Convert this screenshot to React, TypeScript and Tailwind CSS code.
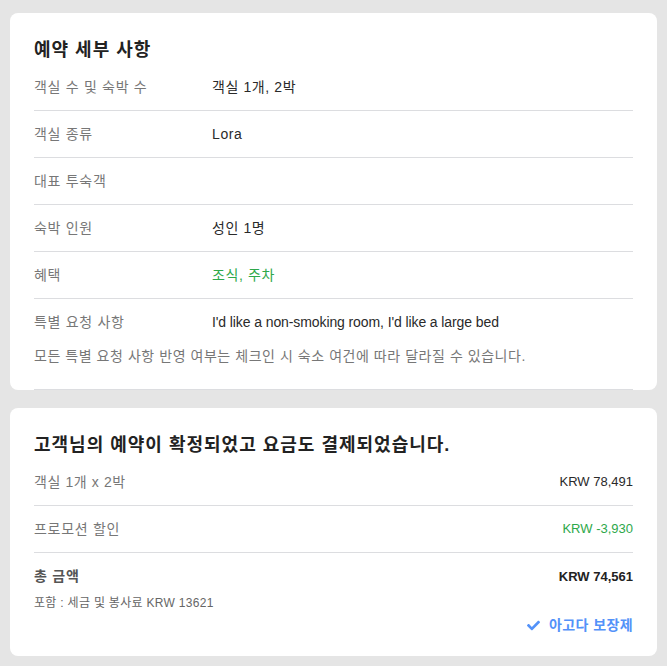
import { FaCheck } from "react-icons/fa";

const details = [
  { label: "객실 수 및 숙박 수", value: "객실 1개, 2박" },
  { label: "객실 종류", value: "Lora" },
  { label: "대표 투숙객", value: "" },
  { label: "숙박 인원", value: "성인 1명" },
  { label: "혜택", value: "조식, 주차", green: true },
  { label: "특별 요청 사항", value: "I'd like a non-smoking room, I'd like a large bed", latin: true },
];

export default function App() {
  return (
    <div
      className="min-h-[666px] bg-[#e5e5e5] px-[10px] pt-[13px] pb-[10px] flex flex-col gap-[18px]"
      style={{ fontFamily: '"Liberation Sans", "Noto Sans CJK KR", sans-serif' }}
    >
      {/* Booking details */}
      <section className="bg-white rounded-lg pt-[23px] px-6">
        <h2 className="text-[18px] leading-[28px] font-bold text-[#222] tracking-[1px]">예약 세부 사항</h2>
        <div>
          {details.map((row, i) => (
            <div
              key={row.label}
              className={`flex h-[47px] items-center text-[14px] ${i < details.length - 1 ? "border-b border-[#dcdde0]" : ""}`}
            >
              <div className="w-[178px] text-[#777] tracking-[0.7px]">{row.label}</div>
              <div
                className={`${row.green ? "text-[#2ea84a]" : "text-[#2a2a2a]"} ${row.latin ? "tracking-[-0.1px]" : "tracking-[0.6px]"}`}
              >
                {row.value}
              </div>
            </div>
          ))}
        </div>
        <p className="text-[14px] text-[#777] tracking-[0.55px] pb-[22px] border-b border-[#dcdde0]">
          모든 특별 요청 사항 반영 여부는 체크인 시 숙소 여건에 따라 달라질 수 있습니다.
        </p>
      </section>

      {/* Payment summary */}
      <section className="bg-white rounded-lg pt-[23px] pb-[20px] px-6">
        <h2 className="text-[18px] leading-[28px] font-bold text-[#222] tracking-[1px]">
          고객님의 예약이 확정되었고 요금도 결제되었습니다.
        </h2>
        <div>
          <div className="flex h-[47px] items-center justify-between text-[14px] border-b border-[#dcdde0]">
            <span className="text-[#777] tracking-[0.6px]">객실 1개 x 2박</span>
            <span className="text-[#2a2a2a] text-[13px]">KRW 78,491</span>
          </div>
          <div className="flex h-[47px] items-center justify-between text-[14px] border-b border-[#dcdde0]">
            <span className="text-[#777] tracking-[0.7px]">프로모션 할인</span>
            <span className="text-[#2ea84a] text-[13px]">KRW -3,930</span>
          </div>
          <div className="flex items-center justify-between text-[14px] pt-[13px]">
            <span className="font-bold text-[#555] tracking-[0.8px]">총 금액</span>
            <span className="font-bold text-[#222] text-[13px]">KRW 74,561</span>
          </div>
          <div className="text-[12px] text-[#666] mt-[7px] tracking-[0.3px]">포함 : 세금 및 봉사료 KRW 13621</div>
          <div className="flex justify-end items-center gap-[9px] mt-[3px] text-[14px] text-[#5392f9] font-bold tracking-[0.4px]">
            <FaCheck className="w-[13px] h-[13px]" />
            <span>아고다 보장제</span>
          </div>
        </div>
      </section>
    </div>
  );
}
